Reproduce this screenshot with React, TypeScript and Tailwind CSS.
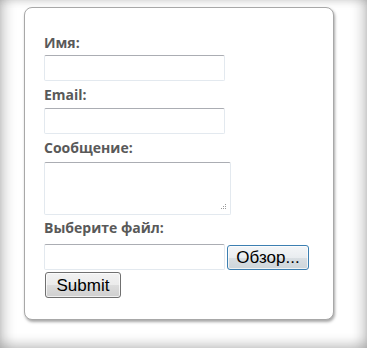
import { ReactNode } from 'react';

function Label({ children, className }: { children: ReactNode; className?: string }) {
    return (
        <label className={"block text-[14px] leading-4 font-bold text-[#595959] " + (className ?? '')}>
            {children}
        </label>
    );
}

function TextBox({ className }: { className?: string }) {
    return (
        <div
            className={
                "h-[26px] bg-white border border-[#e3e9ef] border-t-[#abadb3] rounded-[2px] " + (className ?? '')
            }
        />
    );
}

export default function App() {
    return (
        <div className="w-[367px] h-[348px] bg-white overflow-hidden shadow-[inset_0_-8px_10px_-2px_rgba(0,0,0,0.16),inset_12px_0_12px_-6px_rgba(0,0,0,0.16),inset_-12px_0_12px_-6px_rgba(0,0,0,0.16),inset_0_6px_8px_-4px_rgba(0,0,0,0.12)] pt-[7px] pl-[24px] font-['Open_Sans',sans-serif]">
            <div className="w-[310px] h-[313px] bg-white border border-[#a8a8a8] rounded-[8px] shadow-[1px_2px_3px_rgba(0,0,0,0.35)] pl-[19px] pt-[27px]">
                <Label>Имя:</Label>
                <TextBox className="w-[181px] mt-[4px]" />
                <Label className="mt-[6px]">Email:</Label>
                <TextBox className="w-[181px] mt-[5px]" />
                <Label className="mt-[6px]">Сообщение:</Label>
                <div className="relative w-[187px] h-[53px] mt-[6px] bg-white border border-[#e3e9ef] border-t-[#abadb3] rounded-[2px]">
                    <svg className="absolute right-[3px] bottom-[3px]" width="7" height="7" viewBox="0 0 7 7">
                        <rect x="5" y="0" width="1" height="1" fill="#9a9a9a" />
                        <rect x="3" y="2" width="1" height="1" fill="#9a9a9a" />
                        <rect x="5" y="2" width="1" height="1" fill="#9a9a9a" />
                        <rect x="1" y="4" width="1" height="1" fill="#9a9a9a" />
                        <rect x="3" y="4" width="1" height="1" fill="#9a9a9a" />
                        <rect x="5" y="4" width="1" height="1" fill="#9a9a9a" />
                    </svg>
                </div>
                <Label className="mt-[5px]">Выберите файл:</Label>
                <div className="flex items-start gap-[2px] mt-[8px]">
                    <TextBox className="w-[181px]" />
                    <button className="w-[82px] h-[25px] mt-[1px] rounded-[3px] border border-[#3c7fb1] bg-[linear-gradient(#f4f6f8,#e9edf0_50%,#d9dfe3_51%,#cdd5da)] text-[17px] leading-none text-black font-['Liberation_Sans',sans-serif] shadow-[inset_0_0_0_1px_rgba(255,255,255,0.7)]">
                        Обзор...
                    </button>
                </div>
                <button className="mt-[2px] ml-[1px] w-[76px] h-[26px] rounded-[3px] border border-[#707070] bg-[linear-gradient(#f2f2f2,#ebebeb_50%,#dddddd_51%,#cfcfcf)] text-[17px] leading-none text-black font-['Liberation_Sans',sans-serif] shadow-[inset_0_0_0_1px_rgba(255,255,255,0.7)]">
                    Submit
                </button>
            </div>
        </div>
    );
}
